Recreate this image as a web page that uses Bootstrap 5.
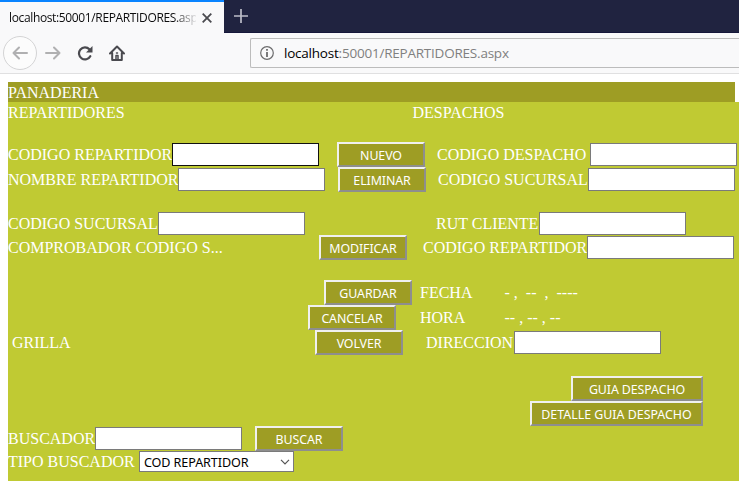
<!DOCTYPE html>
<html lang="es">
<head>
<meta charset="utf-8">
<meta name="viewport" content="width=device-width, initial-scale=1">
<title>REPARTIDORES</title>
<link href="https://cdn.jsdelivr.net/npm/bootstrap@5.3.0/dist/css/bootstrap.min.css" rel="stylesheet">
<style>
body{width:739px;height:481px;font-family:"Open Sans",sans-serif;background:#fff}
svg{display:block;flex:none}
.tabstrip{height:33px;background:#202340;border-bottom:1px solid #15173a}
.browsertab{width:224px;height:33px;background:#f9f9fa;border-top:2px solid #0a84ff;padding-left:9px}
.tabtitle{width:187px;margin-right:6px;font-size:12px;line-height:30px;letter-spacing:-.36px;color:#0c0c0d;-webkit-mask-image:linear-gradient(90deg,#000 165px,transparent 189px)}
.toolbar{height:41px;background:#f9f9fa;border-bottom:1px solid #e0e0e1}
.backbtn{width:34px;height:34px;border:1px solid #d4d4d5;background:#fcfcfc;margin-left:3px}
.addressbar{height:30px;width:489px;border:1px solid #bcbcbc;border-right:0;border-radius:2px 0 0 2px;padding-left:9px;font-size:13.5px;letter-spacing:-.22px;color:#808080;white-space:pre}
.address{margin-left:2px}
.page{margin-left:8px;font:16px/20px "Liberation Serif",serif;color:#fff;white-space:pre}
.banner{width:727px;height:20px;line-height:22px;background:#9e9d24}
.formarea{height:379px;background:#c0ca33}
.line{display:flex;align-items:center;height:25px}
.line.head{height:20px;align-items:flex-start}
.line.short{height:23px}
.line>span{flex:none;line-height:24px}
.line.head>span{line-height:22px}
.box{flex:none;width:147px;height:23px;border:1px solid #7a7a7a;border-radius:0;background:#fff;padding:1px;color:#000}
.box:focus{outline:0}
.box.active{border-color:#111}
.act{flex:none;width:88px;height:25px;padding:2px 0 0;border:2px solid;border-color:#f0f0f0 #8e8e8e #8e8e8e #f0f0f0;background:#9e9d24;color:#fff;font:12.4px/18px "Noto Sans",sans-serif;text-align:center;letter-spacing:-.1px}
.wide1{width:132px}.wide2{width:173px;letter-spacing:0}
.pick{width:155px;height:21px;border:1px solid #7a7a7a;background:#fff;color:#000;font:12.6px/19px "Noto Sans",sans-serif;letter-spacing:-.1px;padding:0 3px 0 4px}
.pick>span{padding-top:1px}
.w404{width:404.5px}.w164{width:164px}.w170{width:170px}.w150{width:150px}.w311{width:311px}.w303{width:303px}.w87{width:87px}.w131{width:131px}
.w153{width:153px}.w103{width:103px}.w164b{width:164px}.w88{width:88px}.w84{width:84.5px}
.line>.w131{line-height:22px}
.m4{margin-left:4px}.m8{margin-left:8px}.m12{margin-left:12px}.m13{margin-left:13px}.m16{margin-left:16px}.m18{margin-left:18px}.m23{margin-left:23px}.m24{margin-left:24px}.m131{margin-left:131px}.m300{margin-left:300px}.m316{margin-left:316px}.m522{margin-left:522px}.m563{margin-left:563px}
.top20{margin-top:20px}.top21{margin-top:21px}
</style>
<script src="https://cdn.jsdelivr.net/npm/bootstrap@5.3.0/dist/js/bootstrap.bundle.min.js"></script>
</head>
<body class="overflow-hidden">
<header>
<div class="tabstrip d-flex">
<div class="browsertab d-flex align-items-center"><div class="tabtitle text-nowrap overflow-hidden">localhost:50001/REPARTIDORES.aspx</div>
<svg width="10" height="10" viewBox="0 0 10 10" fill="none" stroke="#4a4a4f" stroke-width="1.8"><path d="M.7.7l8.6 8.6M9.3.7L.7 9.3"/></svg></div>
<svg class="ms-2 mt-2" width="16" height="16" viewBox="0 0 16 16" fill="none" stroke="#bcbdc8" stroke-width="1.7"><path d="M9 1v14M2 8h14"/></svg>
</div>
<div class="toolbar d-flex align-items-center">
<div class="backbtn rounded-circle d-flex align-items-center justify-content-center"><svg width="16" height="16" viewBox="0 0 16 16" fill="none" stroke="#b0b0b1" stroke-width="2" stroke-linecap="round" stroke-linejoin="round"><path d="M15 8H1.5M7 2.5L1.5 8 7 13.5"/></svg></div>
<svg class="ms-2" width="16" height="16" viewBox="0 0 16 16" fill="none" stroke="#b0b0b1" stroke-width="2" stroke-linecap="round" stroke-linejoin="round"><path d="M1 8h13.5M9 2.500L14.500 8 9 13.500"/></svg>
<svg class="ms-3" width="16" height="16" viewBox="0 0 16 16"><path d="M13.300 11.200A6 6 0 1 1 12.400 4.300" fill="none" stroke="#4a4a4f" stroke-width="2.200" stroke-linecap="round"/><path d="M15.500 1v6.500H9z" fill="#4a4a4f"/></svg>
<svg class="ms-3" width="16" height="16" viewBox="0 0 16 16" fill="none" stroke="#4a4a4f" stroke-width="2" stroke-linecap="round" stroke-linejoin="round"><path d="M1 8.500L8 1.500l7 7M3.200 8v7h9.600V8"/><path d="M7 14v-3.500h2V14" stroke-width="1.500"/><path d="M7.500 8h1" stroke-width="1.500"/></svg>
<div class="addressbar d-flex align-items-center ms-auto"><svg class="me-2" width="14" height="14" viewBox="0 0 14 14"><circle cx="7" cy="7" r="6.300" fill="none" stroke="#6c6c6d" stroke-width="1.200"/><path d="M6.100 6h1.800v5H6.100zM6.100 3h1.800v1.800H6.100z" fill="#6c6c6d"/></svg><span class="address"><span class="text-black">localhost</span>:50001/REPARTIDORES.aspx</span></div>
</div>
</header>
<main class="page mt-2"><div class="banner">PANADERIA</div><form class="formarea"><div class="line head"><span class="w404">REPARTIDORES</span><span>DESPACHOS</span></div><div class="line top20"><span class="w164">CODIGO REPARTIDOR</span><input class="box active"><button type="button" class="act m18">NUEVO</button><span class="m12 w153">CODIGO DESPACHO</span><input class="box"></div><div class="line"><span class="w170">NOMBRE REPARTIDOR</span><input class="box"><button type="button" class="act m13">ELIMINAR</button><span class="m12 w150">CODIGO SUCURSAL</span><input class="box"></div><div class="line short top20"><span class="w150">CODIGO SUCURSAL</span><input class="box"><span class="m131 w103">RUT CLIENTE</span><input class="box"></div><div class="line"><span class="w311">COMPROBADOR CODIGO S...</span><button type="button" class="act">MODIFICAR</button><span class="m16 w164b">CODIGO REPARTIDOR</span><input class="box"></div><div class="line top20"><button type="button" class="act m316">GUARDAR</button><span class="m8 w84">FECHA</span><span>- ,  --  ,  ----</span></div><div class="line"><button type="button" class="act m300">CANCELAR</button><span class="m24 w84">HORA</span><span>-- , -- , --</span></div><div class="line"><span class="m4 w303">GRILLA</span><button type="button" class="act">VOLVER</button><span class="m23 w88">DIRECCION</span><input class="box"></div><div class="line top21"><button type="button" class="act wide1 m563">GUIA DESPACHO</button></div><div class="line"><button type="button" class="act wide2 m522">DETALLE GUIA DESPACHO</button></div><div class="line"><span class="w87">BUSCADOR</span><input class="box"><button type="button" class="act m13">BUSCAR</button></div><div class="line short align-items-start"><span class="w131">TIPO BUSCADOR</span><div class="pick d-flex align-items-center justify-content-between"><span>COD REPARTIDOR</span><svg width="10" height="6" viewBox="0 0 10 6" fill="none" stroke="#555" stroke-width="1.200"><path d="M1 .8l4 4 4-4"/></svg></div></div></form></main>
</body>
</html>
